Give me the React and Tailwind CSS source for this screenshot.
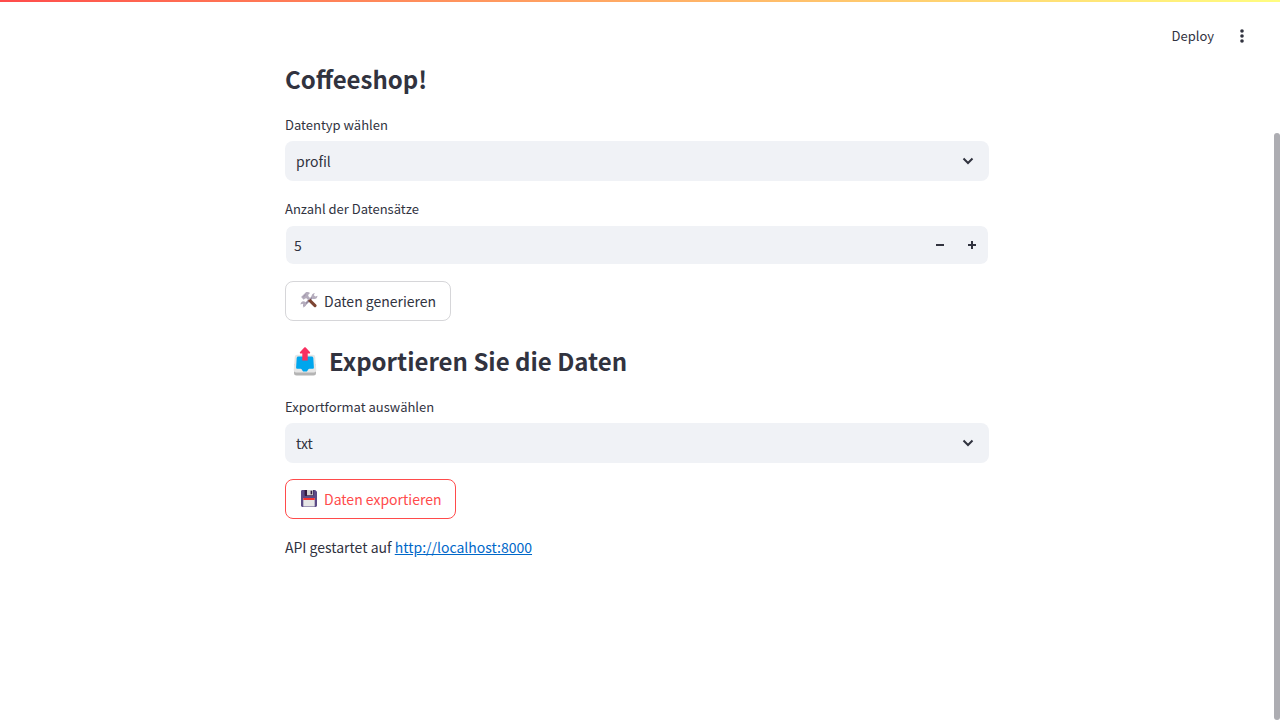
import { useState } from "react";

function ToolsIcon() {
  return (
    <svg viewBox="0 1 18 18" className="size-[18px] shrink-0" aria-hidden="true">
      <path d="M4.2 14.2 12.6 6" stroke="#998ea4" strokeWidth="2.2" strokeLinecap="round" />
      <path d="M12 7.2c-1.200-2.100 0-4.900 2.800-5.300l-1 2.400 1.500 1.300 2.200-.9c0 2.800-2.800 4.500-5.500 2.500z" fill="#b4acbc" />
      <path d="M5.700 11.200c1.200 2.100-.1 4.900-2.900 5.300l1-2.400-1.300-1.400-2 .8c0-2.800 2.800-4.500 5.200-2.300z" fill="#b4acbc" />
      <path d="M9.400 9.200 15 14.600" stroke="#7d4533" strokeWidth="3.200" strokeLinecap="round" />
      <path d="M1.100 5.900 5.900 1.200c1.400-.5 3.100-.1 4.100.9L8.100 3.900l.5 1.700 2 2-1.900 1.900-2.300-2.200-1.300.2-1.500 1.300z" fill="#b4acbc" />
      <path d="m3.400 5.900 2.300-2.200" stroke="#998ea4" strokeWidth="1" />
    </svg>
  );
}

function FloppyIcon() {
  return (
    <svg viewBox="0 1 18 18" className="size-[18px] shrink-0" aria-hidden="true">
      <path d="M2.400 1h12.800l1.800 1.800v13.800c0 .8-.6 1.400-1.400 1.400H2.400C1.600 18 1 17.400 1 16.600V2.400C1 1.600 1.600 1 2.400 1z" fill="#5b4a86" />
      <path d="M4.600 1h8.800v5.200c0 .5-.4.8-.8.8H5.400c-.5 0-.8-.3-.8-.8z" fill="#321b41" />
      <path d="M7 1h6v5.300H7z" fill="#d3d3d3" />
      <path d="M10.600 1.700h1.600v3.600h-1.600z" fill="#321b41" />
      <path d="M3.300 9h11.400v8.500H3.300z" fill="#e6e6e6" />
      <path d="M3.300 9h11.400v2H3.300z" fill="#f8312f" />
    </svg>
  );
}

function OutboxIcon() {
  return (
    <svg viewBox="0 -1 24 30" className="h-[30px] w-6 shrink-0" aria-hidden="true">
      <path d="M1 17h22v9a2.500 2.500 0 0 1-2.500 2.500h-17A2.500 2.500 0 0 1 1 26z" fill="#b4b4b4" />
      <path d="M4 7.800h16c1.200 0 2 .8 2.200 2L23.300 23c0 1.500-1 2.500-2.400 2.500H3.100C1.700 25.500.7 24.500.7 23L1.800 9.800c.2-1.200 1-2 2.200-2z" fill="#e6e6e6" />
      <path d="M5.300 9.500h13.400c.9 0 1.500.6 1.600 1.500l.6 9.500c0 .8-.5 1.300-1.300 1.300h-3.200c-.6 0-.9.3-1.200.8l-.9 1.300c-.3.500-.7.700-1.200.7h-2.200c-.5 0-.9-.2-1.200-.7l-.9-1.300c-.3-.5-.6-.8-1.200-.8H4.400c-.8 0-1.300-.5-1.300-1.300L3.700 11c.1-.9.700-1.500 1.600-1.500z" fill="#00a6ed" />
      <path d="M11.300.5c.4-.4 1-.4 1.400 0l4.200 4.500c.6.700.2 1.600-.7 1.600h-1.500v7H9.300v-7H7.800c-.9 0-1.300-.9-.7-1.600z" fill="#f92f60" />
    </svg>
  );
}

function SelectField({ id, label, options }) {
  return (
    <div className="flex flex-col gap-1">
      <label htmlFor={id} className="text-[13px] leading-6">{label}</label>
      <div className="relative">
        <select
          id={id}
          className="h-10 w-full appearance-none rounded-lg bg-[#f0f2f6] pr-10 pl-[11px] outline-none"
        >
          {options.map((option) => (
            <option key={option}>{option}</option>
          ))}
        </select>
        <svg viewBox="0 0 12 8" className="pointer-events-none absolute top-4 right-[15px] h-2 w-3" fill="none" aria-hidden="true">
          <path d="m1.500 1.500 4.500 4.500 4.500-4.500" stroke="#31333f" strokeWidth="2" />
        </svg>
      </div>
    </div>
  );
}

function Header() {
  return (
    <header>
      <div className="h-0.5 bg-linear-to-r from-[#ff4b4b] to-[#fffd80]" />
      <div className="absolute top-6 right-[26px] flex items-center gap-4">
        <button type="button" className="text-[13px] leading-6">Deploy</button>
        <button type="button" aria-label="Menu" className="flex size-6 items-center justify-center">
          <svg viewBox="0 0 4 14" className="h-3.5 w-1" fill="#31333f" aria-hidden="true">
            <circle cx="2" cy="2" r="1.800" />
            <circle cx="2" cy="7" r="1.800" />
            <circle cx="2" cy="12" r="1.800" />
          </svg>
        </button>
      </div>
    </header>
  );
}

export default function App() {
  const [count, setCount] = useState(5);

  return (
    <div className="flex h-screen overflow-hidden bg-white font-['Noto_Sans_CJK_SC',sans-serif] text-[#31333f]">
      <div className="min-w-0 flex-1">
        <main className="mx-auto flex max-w-[704px] flex-col gap-4 pt-[63px] text-sm">
          <h3 className="pb-0.5 text-2xl leading-8 font-semibold">Coffeeshop!</h3>
          <SelectField id="datatype" label="Datentyp wählen" options={["profil"]} />
          <div className="flex flex-col gap-1">
            <label htmlFor="count" className="text-[13px] leading-6">Anzahl der Datensätze</label>
            <div className="flex h-10 rounded-lg border border-white bg-[#f0f2f6] bg-clip-padding">
              <input
                id="count"
                inputMode="numeric"
                value={count}
                onChange={(e) => setCount(Number(e.target.value) || 0)}
                className="min-w-0 flex-1 bg-transparent px-2 outline-none"
              />
              <button type="button" aria-label="Weniger" onClick={() => setCount(count - 1)} className="flex w-8 items-center justify-center">
                <svg viewBox="0 0 8 8" className="size-2" aria-hidden="true">
                  <path d="M0 3h8v2H0z" fill="#31333f" />
                </svg>
              </button>
              <button type="button" aria-label="Mehr" onClick={() => setCount(count + 1)} className="flex w-8 items-center justify-center">
                <svg viewBox="0 0 8 8" className="size-2" aria-hidden="true">
                  <path d="M0 3h8v2H0zM3 0h2v8H3z" fill="#31333f" />
                </svg>
              </button>
            </div>
          </div>
          <button type="button" className="flex h-10 items-center gap-1.5 self-start rounded-lg border border-[#31333f]/20 px-3.5">
            <ToolsIcon />
            Daten generieren
          </button>
          <h3 className="flex items-center gap-3 pt-2 pb-0.5 pl-2 text-2xl leading-8 font-semibold">
            <OutboxIcon />
            Exportieren Sie die Daten
          </h3>
          <SelectField id="format" label="Exportformat auswählen" options={["txt"]} />
          <button type="button" className="flex h-10 items-center gap-1.5 self-start rounded-lg border border-[#ff4b4b] px-3.5 text-[#ff4b4b]">
            <FloppyIcon />
            Daten exportieren
          </button>
          <p className="leading-6">
            API gestartet auf{" "}
            <a href="http://localhost:8000" className="text-[#0068c9] underline">http://localhost:8000</a>
          </p>
        </main>
      </div>
      <div className="flex w-1.5 flex-col pt-[133px]" aria-hidden="true">
        <div className="flex-1 rounded-full bg-[#adadb2]" />
      </div>
      <div className="absolute inset-x-0 top-0">
        <Header />
      </div>
    </div>
  );
}
